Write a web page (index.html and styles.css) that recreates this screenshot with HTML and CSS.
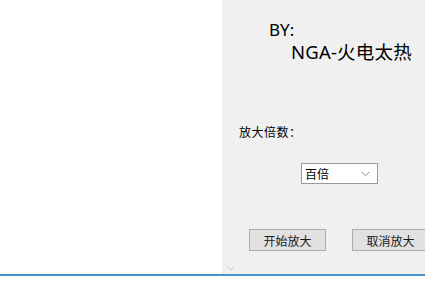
FILE: index.html
```html
<!DOCTYPE html>
<html lang="zh-CN">

<head>
    <meta charset="UTF-8">
    <meta name="viewport" content="width=device-width, initial-scale=1.0">
    <title>放大</title>
    <link rel="stylesheet" href="styles.css">
</head>

<body>
    <div class="window">
        <div class="canvas"></div>
        <div class="panel">
            <p class="by">BY:</p>
            <p class="author">NGA-火电太热</p>
            <label class="field-label" for="scale">放大倍数：</label>
            <div class="select" id="scale">
                <span>百倍</span>
                <svg width="9" height="6" viewBox="0 0 9 6">
                    <path d="M0.5 0.8 L4.5 4.8 L8.5 0.8" fill="none" stroke="#8a8a8a" stroke-width="1"/>
                </svg>
            </div>
            <div class="actions">
                <button type="button">开始放大</button>
                <button type="button">取消放大</button>
            </div>
            <div class="scroll-hint">
                <svg width="8" height="5" viewBox="0 0 8 5">
                    <path d="M0.5 0.5 L4 4 L7.5 0.5" fill="none" stroke="#c4c4c4" stroke-width="1"/>
                </svg>
            </div>
        </div>
    </div>
    <div class="status-line"></div>
</body>

</html>
```

FILE: styles.css
```css
body {
    margin: 0;
    font-family: "Noto Sans", "Noto Sans CJK SC", sans-serif;
    background-color: #fff;
    color: #000;
}

.window {
    display: flex;
    height: 274px;
    overflow: hidden;
}

.canvas {
    width: 222px;
    flex-shrink: 0;
    background-color: #fff;
}

.panel {
    flex: 1;
    background-color: #f0f0f0;
    padding-top: 20px;
    overflow: hidden;
}

.panel p {
    margin: 0;
}

.by {
    margin-left: 47px !important;
    font-size: 17px;
    line-height: 20px;
}

.author {
    margin: 1px 0 0 69px !important;
    font-size: 18.5px;
    line-height: 22px;
    letter-spacing: 0.2px;
}

.field-label {
    display: block;
    margin: 61px 0 0 17px;
    font-family: "Noto Sans CJK SC", sans-serif;
    font-size: 12px;
    line-height: 16px;
    letter-spacing: 0.5px;
}

.select {
    display: flex;
    justify-content: space-between;
    align-items: center;
    box-sizing: border-box;
    width: 77px;
    height: 21px;
    margin: 23px 0 0 79px;
    padding: 0 7px 0 3px;
    background-color: #fff;
    border: 1px solid #9a9a9a;
    font-family: "Noto Sans CJK SC", sans-serif;
    font-size: 12px;
}

.actions {
    display: flex;
    gap: 26px;
    margin-top: 45px;
    padding-left: 27px;
    width: 250px;
}

.actions button {
    flex-shrink: 0;
    width: 77px;
    height: 22px;
    padding: 0;
    background-color: #e1e1e1;
    border: 1px solid #adadad;
    font-family: "Noto Sans CJK SC", sans-serif;
    font-size: 12px;
    color: #1a1a1a;
}

.scroll-hint {
    margin: 14px 0 0 5px;
    line-height: 0;
}

.status-line {
    height: 2px;
    background-color: #4a90c8;
}
```
